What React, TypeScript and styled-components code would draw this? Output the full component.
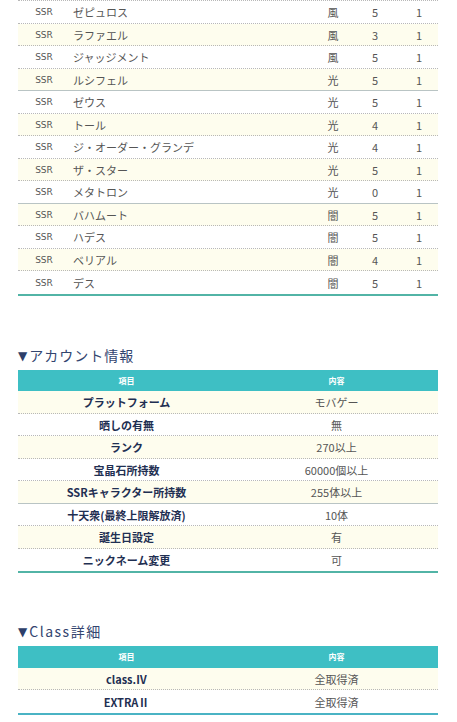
import React from "react";
import styled, { createGlobalStyle } from "styled-components";

const Global = createGlobalStyle`
  html, body { margin: 0; padding: 0; background: #ffffff; }
  body { font-family: "Noto Sans CJK JP", "Noto Sans", sans-serif; color: #555; }
`;

const Page = styled.div`
  width: 457px;
  padding: 0 19px 0 18px;
  box-sizing: border-box;
`;

const Table = styled.div<{ $double?: boolean }>`
  display: flex;
  flex-direction: column;
  border-bottom: ${(p) => (p.$double ? "2px solid #4ab3c4" : "2px solid #52b4a6")};
  box-shadow: ${(p) => (p.$double ? "0 1px 0 #a9dbe3" : "none")};
`;

const CharTable = styled(Table)`
  border-top: 1px dotted #b8b8b8;
`;

const CharRow = styled.div<{ $alt: boolean; $solid?: boolean; $last?: boolean }>`
  display: grid;
  grid-template-columns: 52px 1fr 46px 38px 44px;
  align-items: center;
  height: 22.5px;
  box-sizing: border-box;
  padding-top: 1px;
  background: ${(p) => (p.$alt ? "#fefdee" : "#ffffff")};
  border-bottom: ${(p) => (p.$last ? "none" : p.$solid ? "1px solid #b9c4c4" : "1px dotted #b8b8b8")};
`;

const Rarity = styled.span`
  font-family: "DejaVu Sans", Verdana, sans-serif;
  font-size: 9px;
  color: #555;
  text-align: center;
`;

const Name = styled.span`
  font-size: 11px;
  color: #555;
  padding-left: 3px;
  white-space: nowrap;
`;

const Cell = styled.span<{ $pad?: number }>`
  font-size: 11px;
  color: #555;
  text-align: center;
  padding-left: ${(p) => p.$pad ?? 0}px;
`;

const Heading = styled.h2<{ $top: number; $wide?: boolean }>`
  margin: ${(p) => p.$top}px 0 5px 0;
  height: 20px;
  font-size: 14px;
  line-height: 20px;
  font-weight: normal;
  letter-spacing: ${(p) => (p.$wide ? 1.5 : 1)}px;
  color: #33456f;
  display: flex;
  align-items: center;
`;

const Mark = styled.span`
  font-family: "DejaVu Sans", sans-serif;
  font-size: 12px;
  line-height: 1;
  letter-spacing: 0;
  margin: 2px 2px 0 0;
  color: #2d3f6a;
`;

const HeadRow = styled.div`
  display: grid;
  grid-template-columns: 217px 1fr;
  align-items: center;
  height: 21.5px;
  background: #3ebfc4;
`;

const HeadCell = styled.span`
  font-size: 8px;
  font-weight: bold;
  color: #ffffff;
  text-align: center;
`;

const InfoRow = styled.div<{ $alt: boolean; $solid?: boolean; $last?: boolean }>`
  display: grid;
  grid-template-columns: 217px 1fr;
  align-items: center;
  height: 22.5px;
  box-sizing: border-box;
  padding-top: 1px;
  background: ${(p) => (p.$alt ? "#fefdee" : "#ffffff")};
  border-bottom: ${(p) => (p.$last ? "none" : p.$solid ? "1px solid #b9c4c4" : "1px dotted #b8b8b8")};
`;

const Key = styled.span`
  font-size: 11px;
  font-weight: bold;
  color: #1f2f52;
  text-align: center;
  white-space: nowrap;
`;

const Val = styled.span`
  font-size: 11px;
  color: #555;
  text-align: center;
  white-space: nowrap;
`;

const chars: [string, string, string][] = [
  ["ゼピュロス", "風", "5"],
  ["ラファエル", "風", "3"],
  ["ジャッジメント", "風", "5"],
  ["ルシフェル", "光", "5"],
  ["ゼウス", "光", "5"],
  ["トール", "光", "4"],
  ["ジ・オーダー・グランデ", "光", "4"],
  ["ザ・スター", "光", "5"],
  ["メタトロン", "光", "0"],
  ["バハムート", "闇", "5"],
  ["ハデス", "闇", "5"],
  ["ベリアル", "闇", "4"],
  ["デス", "闇", "5"],
];

const account: [string, string][] = [
  ["プラットフォーム", "モバゲー"],
  ["晒しの有無", "無"],
  ["ランク", "270以上"],
  ["宝晶石所持数", "60000個以上"],
  ["SSRキャラクター所持数", "255体以上"],
  ["十天衆(最終上限解放済)", "10体"],
  ["誕生日設定", "有"],
  ["ニックネーム変更", "可"],
];

const classes: [string, string][] = [
  ["class.Ⅳ", "全取得済"],
  ["EXTRAⅡ", "全取得済"],
];

export default function App() {
  return (
    <Page>
      <Global />
      <CharTable>
        {chars.map(([n, e, v], i) => (
          <CharRow key={n} $alt={i % 2 === 1} $solid={i === 3 || i === 8} $last={i === chars.length - 1}>
            <Rarity>SSR</Rarity>
            <Name>{n}</Name>
            <Cell>{e}</Cell>
            <Cell>{v}</Cell>
            <Cell $pad={6}>1</Cell>
          </CharRow>
        ))}
      </CharTable>

      <Heading $top={49}>
        <Mark>▼</Mark>アカウント情報
      </Heading>
      <Table>
        <HeadRow>
          <HeadCell>項目</HeadCell>
          <HeadCell>内容</HeadCell>
        </HeadRow>
        {account.map(([k, v], i) => (
          <InfoRow key={k} $alt={i % 2 === 0} $solid={i === 4} $last={i === account.length - 1}>
            <Key>{k}</Key>
            <Val>{v}</Val>
          </InfoRow>
        ))}
      </Table>

      <Heading $top={48} $wide>
        <Mark>▼</Mark>Class詳細
      </Heading>
      <Table $double>
        <HeadRow>
          <HeadCell>項目</HeadCell>
          <HeadCell>内容</HeadCell>
        </HeadRow>
        {classes.map(([k, v], i) => (
          <InfoRow key={k} $alt={i % 2 === 0} $last={i === classes.length - 1}>
            <Key>{k}</Key>
            <Val>{v}</Val>
          </InfoRow>
        ))}
      </Table>
    </Page>
  );
}
